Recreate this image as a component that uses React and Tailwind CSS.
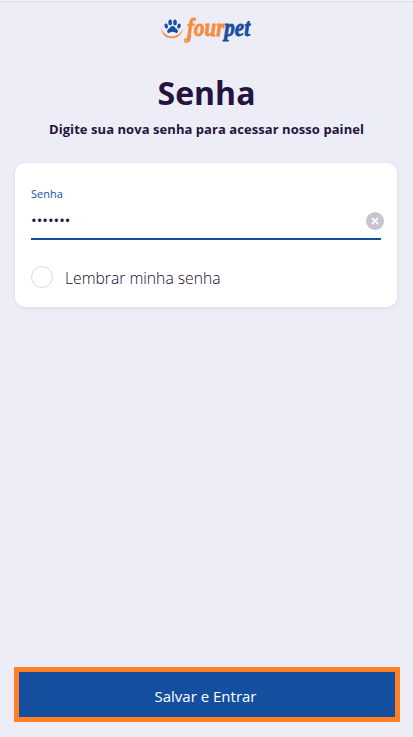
function Logo() {
  return (
    <svg width="104" height="48" viewBox="-6 -10 104 48" role="img" aria-label="fourpet">
      <g fill="#174f9f" transform="translate(0 -0.8)">
        <ellipse cx="5.200" cy="9.800" rx="1.700" ry="2.500" transform="rotate(-15 5.200 9.800)" />
        <ellipse cx="9.200" cy="6.200" rx="1.800" ry="2.900" />
        <ellipse cx="14" cy="6.200" rx="1.800" ry="2.900" />
        <ellipse cx="18" cy="9.800" rx="1.700" ry="2.500" transform="rotate(15 18 9.800)" />
        <path d="M11.600 9.700c-2 0-2.400 1.700-3.800 2.900-1.300 1.100-1.900 2.200-1.500 3.300.6 1.500 2.100 1.100 3.100.2 1.300-.8 3.100-.8 4.400 0 1 .9 2.500 1.300 3.100-.2.400-1.100-.2-2.200-1.500-3.300-1.400-1.200-1.800-2.900-3.800-2.900z" />
      </g>
      <path d="M.3 10.500C1.200 15.400 5.400 19.400 11 19.400c5.100 0 9.400-3 11-7.800-.6 5.800-5.300 9.700-11 9.700C4.600 21.300-.2 16.600.3 10.500z" fill="#f68b3c" />
      <text x="26" y="19.200" fontSize="26" fontWeight="bold" fontStyle="italic" fontFamily="'Liberation Serif', serif" strokeWidth="0.800" textLength="63" lengthAdjust="spacingAndGlyphs">
        <tspan fill="#f68b3c" stroke="#f68b3c">four</tspan><tspan fill="#174f9f" stroke="#174f9f">pet</tspan>
      </text>
      <path d="M29.500 18.500c-.8 4.600-2 6.700-3.900 6.700-1.600 0-2.400-1.200-2.100-2.300.3-1.200 1.900-1.300 2.400-.3" fill="none" stroke="#f68b3c" strokeWidth="1.400" strokeLinecap="round" />
    </svg>
  );
}

export default function App() {
  return (
    <div className="flex h-[737px] w-[413px] flex-col border-t border-[#f3f3f3] bg-[#ecedf6] font-['Open_Sans',sans-serif] text-[#24143f]">
      <div className="h-px bg-[#dfdfe2]" />
      <header className="flex flex-col items-center pt-[5px]">
        <Logo />
        <h1 className="mt-4 text-[32px] leading-[44px] font-bold">Senha</h1>
        <p className="mt-1 text-[13px] leading-5 font-bold tracking-[0.06px] whitespace-nowrap">
          Digite sua nova senha para acessar nosso painel
        </p>
      </header>
      <section className="mt-6 ml-[15px] flex h-[144px] w-[382px] flex-col rounded-[10px] bg-white px-4 pt-[23px] shadow-[0_1px_4px_rgba(36,20,63,0.08)]">
        <label className="text-[11px] leading-4 text-[#174f9f]">Senha</label>
        <div className="flex h-[38px] w-[353px] items-center justify-between">
          <span className="pb-[2px] text-[15px] leading-5">•••••••</span>
          <svg width="18" height="18" viewBox="0 0 18 18">
            <circle cx="9" cy="9" r="9" fill="#c8c4cf" />
            <path d="M5.900 5.900l6.200 6.200M12.100 5.900l-6.200 6.200" stroke="#fff" strokeWidth="1.500" />
          </svg>
        </div>
        <div className="-mt-[2px] h-[2px] w-[350px] bg-[#144f9f]" />
        <div className="mt-[26px] flex items-center">
          <span className="size-[22px] rounded-full border border-[#dcd9e8]" />
          <span className="ml-3 pt-[2px] text-[15.700px] leading-5 font-light text-[#160530]">Lembrar minha senha</span>
        </div>
      </section>
      <button className="mt-auto mb-[15px] ml-[14px] flex h-[55px] w-[386px] items-center justify-center border-[5px] border-[#ff8026] bg-[#144f9f] pt-[2px] pr-[3px] text-[15px] leading-5 text-white">
        Salvar e Entrar
      </button>
    </div>
  );
}
